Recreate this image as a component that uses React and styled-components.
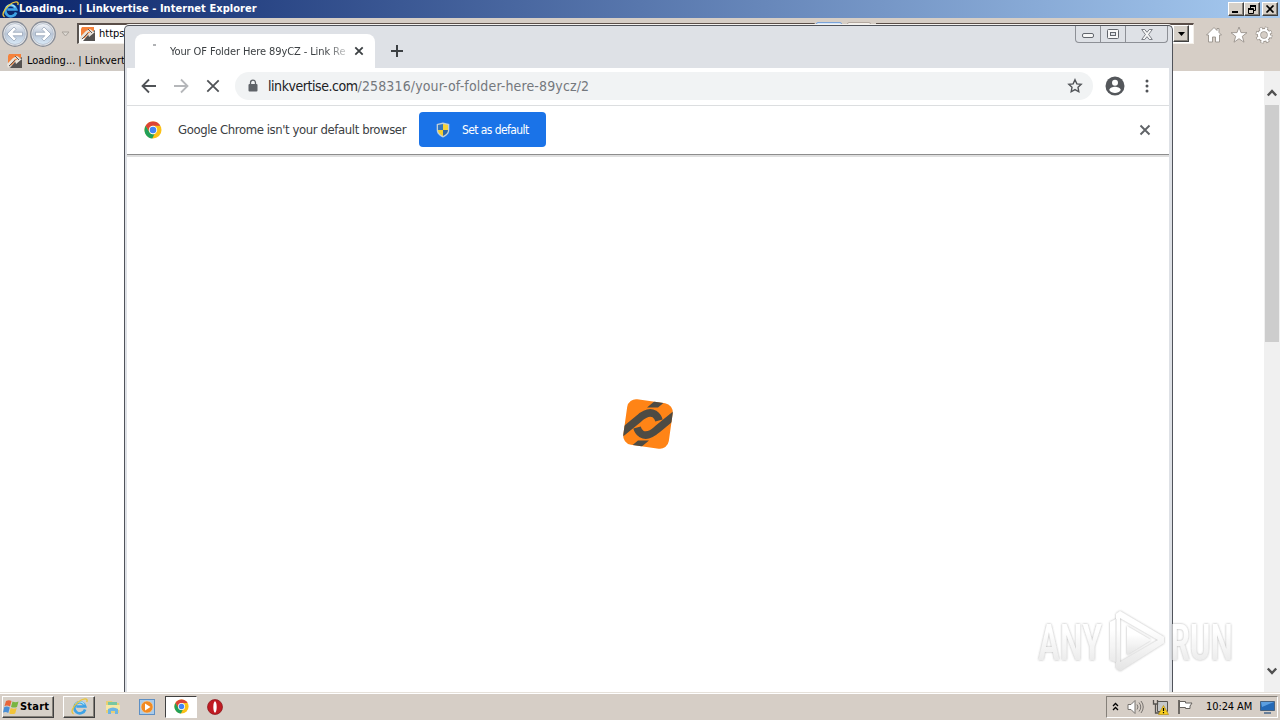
import React from 'react'
import styled, { createGlobalStyle, css } from 'styled-components'

const GlobalStyle = createGlobalStyle`
    body {
        margin: 0;
        overflow: hidden;
    }

    * {
        box-sizing: border-box;
    }

    svg {
        display: block;
        flex: none;
    }
`

const raised = css`
    border: 1px solid;
    border-color: #fff #404040 #404040 #fff;
    box-shadow: inset -1px -1px 0 #858079;
    background: #d6d0c8;
`;

const Desktop = styled.div`
    position: relative;
    width: 1280px;
    height: 720px;
    overflow: hidden;
    display: flex;
    flex-direction: column;
    background: #fff;
    font-family: "DejaVu Sans Condensed", "DejaVu Sans", sans-serif;
    font-stretch: condensed;
    font-size: 11px;
    color: #000;
`;

const Label = styled.span`
    flex: none;
    white-space: pre;
    font-size: ${p => p.$size || 11}px;
    font-weight: ${p => p.$bold ? 700 : 400};
    letter-spacing: ${p => p.$track || 0}px;
    color: ${p => p.$color || 'inherit'};
    line-height: 16px;
`;

const TitleBar = styled.div`
    height: 18px;
    flex: none;
    display: flex;
    align-items: center;
    padding: 0 2px 0 2px;
    background: linear-gradient(90deg, #0a246a, #a6caf0);
`;

const Spacer = styled.div`
    flex: 1;
`;

const CaptionButton = styled.div`
    ${raised}
    width: 16px;
    height: 14px;
    margin-left: ${p => p.$gap || 0}px;
    display: flex;
    align-items: center;
    justify-content: center;
`;

const NavBar = styled.div`
    height: 31px;
    flex: none;
    display: flex;
    align-items: center;
    background: #d6cec6;
    padding: 0 7px 0 1px;
`;

const Field = styled.div`
    flex: none;
    width: ${p => p.$width}px;
    height: 21px;
    margin: 0 0 1px ${p => p.$gap || 0}px;
    display: flex;
    align-items: center;
    background: #fff;
    border: 1px solid #f4f0ea;
    border-top: 2px solid #5a4e48;
    border-left: 2px solid #5a5450;
    padding-left: 1px;
`;

const FieldButton = styled.div`
    flex: none;
    width: ${p => p.$width}px;
    height: 22px;
    margin: 0 0 2px ${p => p.$gap}px;
    background: ${p => p.$active ? '#d3e6fb' : '#f3efea'};
    border: 1px solid ${p => p.$active ? '#7ba3d8' : '#b3a9a1'};
    border-radius: 2px;
`;

const DropButton = styled.div`
    ${raised}
    width: 16px;
    height: 17px;
    margin: 0 4px 0 auto;
    display: flex;
    align-items: center;
    justify-content: center;
`;

const NavIcons = styled.div`
    display: flex;
    gap: 7px;
    margin-left: auto;
    padding-top: 3px;
`;

const TabRow = styled.div`
    height: 22px;
    flex: none;
    background: #d6cec6;
`;

const IeTab = styled.div`
    width: 240px;
    height: 21px;
    margin-top: 1px;
    padding-left: 7px;
    display: flex;
    align-items: center;
    gap: 4px;
    background: #d0cac4;
`;

const IePage = styled.div`
    flex: 1;
    display: flex;
    justify-content: flex-end;
`;

const ScrollBar = styled.div`
    width: 16px;
    display: flex;
    flex-direction: column;
    align-items: center;
    justify-content: space-between;
    background: #f0f0f0;
    padding: 17px 0 16px;
`;

const Thumb = styled.div`
    width: 14px;
    height: 237px;
    margin: 7px 0 auto;
    background: #cdcdcd;
`;

const ChromeWindow = styled.div`
    position: absolute;
    left: 124px;
    top: 25px;
    width: 1049px;
    height: 667px;
    display: flex;
    flex-direction: column;
    border: 1px solid #50535a;
    border-bottom: none;
    border-radius: 5px 5px 0 0;
    background: #dee1e6;
    padding: 0 3px 0 2px;
    box-shadow: 0 -1px 0 #f4f2ef;
    color: #3c4043;
`;

const TabStrip = styled.div`
    height: 42px;
    flex: none;
    display: flex;
    align-items: flex-end;
    padding-left: 8px;
`;

const ChromeTab = styled.div`
    width: 240px;
    height: 34px;
    padding: 0 11px 0 16px;
    display: flex;
    align-items: center;
    background: #fff;
    border-radius: 8px 8px 0 0;
`;

const TabSpinner = styled.div`
    width: 3px;
    height: 2px;
    margin: -13px 14px 0 2px;
    background: #b0b2b5;
`;

const TabTitle = styled.div`
    width: 178px;
    padding-top: 1px;
    mask-image: linear-gradient(90deg, #000 155px, rgba(0, 0, 0, 0.25) 176px);
`;

const PlusIcon = styled.svg`
    margin: 0 0 11px 16px;
`;

const WindowButtons = styled.div`
    align-self: flex-start;
    height: 17px;
    margin-left: auto;
    margin-right: 1px;
    display: flex;
    border: 1px solid #8d9096;
    border-top: none;
    border-radius: 0 0 4px 4px;
`;

const WindowButton = styled.div`
    width: ${p => p.$width}px;
    display: flex;
    align-items: center;
    justify-content: center;
    border-left: ${p => p.$first ? 'none' : '1px solid #8d9096'};
`;

const Toolbar = styled.div`
    height: 38px;
    flex: none;
    display: flex;
    align-items: center;
    padding: 0 13px 1px 13px;
    background: #fff;
    border-bottom: 1px solid #dcdee0;
`;

const NavButtons = styled.div`
    display: flex;
    gap: 14px;
`;

const Omnibox = styled.div`
    width: 858px;
    height: 28px;
    margin: 0 12px 0 13px;
    padding: 0 9px 0 12px;
    display: flex;
    align-items: center;
    justify-content: space-between;
    border-radius: 14px;
    background: #f1f3f4;
`;

const Url = styled.div`
    display: flex;
    align-items: center;
    margin: 0 auto 0 9px;
`;

const InfoBar = styled.div`
    height: 49px;
    flex: none;
    display: flex;
    align-items: center;
    padding: 0 16px 1px 17px;
    background: #fff;
    border-bottom: 1px solid #8d8d8d;
`;

const InfoText = styled.div`
    width: 241px;
    margin-left: 16px;
`;

const DefaultButton = styled.div`
    width: 127px;
    height: 35px;
    display: flex;
    align-items: center;
    gap: 12px;
    padding-left: 17px;
    border-radius: 4px;
    background: #1a73e8;
`;

const ChromePage = styled.div`
    flex: 1;
    display: flex;
    align-items: center;
    justify-content: center;
    background: #fff;
    border-top: 2px solid #dfdfdf;
    padding-bottom: 2px;
`;

const Watermark = styled.svg`
    position: absolute;
    left: 1030px;
    top: 604px;
`;

const TaskBar = styled.div`
    height: 28px;
    flex: none;
    display: flex;
    align-items: center;
    padding: 0 2px;
    background: #d6cec6;
    border-top: 1px solid #e6e1da;
    box-shadow: inset 0 1px 0 #fff;
`;

const StartButton = styled.div`
    ${raised}
    width: 52px;
    height: 22px;
    display: flex;
    align-items: center;
`;

const TaskButton = styled.div`
    width: 32px;
    height: 22px;
    display: flex;
    align-items: center;
    justify-content: center;
    margin-left: ${p => p.$gap || 2}px;
    ${p => p.$raised && raised}
    ${p => p.$active && css`
        background: #fff;
        border: 1px solid;
        border-color: #404040 #fff #fff #404040;
    `}
`;

const Tray = styled.div`
    width: 172px;
    height: 22px;
    margin-left: auto;
    display: flex;
    align-items: center;
    padding: 0 2px 0 5px;
    border: 1px solid;
    border-color: #858079 #fff #fff #858079;
`;

const TrayIcons = styled.div`
    display: flex;
    align-items: center;
    gap: 8px;
    width: 94px;
`;

function IeLogo({ size })
{
    return <svg width={size} height={size} viewBox="0 0 16 16" fill="none">
        <path d="M13.3 10.800A5.200 5.200 0 1 1 13.400 8H5" stroke="#3fa3e6" strokeWidth="2.500" />
        <path d="M12.600 6.200A4.900 4.900 0 0 0 4.200 5.800" stroke="#a5e4fb" strokeWidth="1.100" />
        <path d="M2.500 14.800C-.7 14 1.500 8 6.500 4 11.500 0 16.500-.4 14.800 3.800" stroke="#e8c53c" strokeWidth="1.300" />
    </svg>;
}

function LinkIcon()
{
    return <svg width="16" height="16" viewBox="0 0 16 16">
        <path d="M2 1h12v4L9 7 5 12 1 13V3z" fill="#f5823b" />
        <path d="M15 4v11H3l5-6z" fill="#555251" />
        <path d="M0 11 6 5l4-2 3 2-5 1-7 9zM8 8l4-3 3 1-6 5z" fill="#e9e4dc" />
        <path d="M8 3l4 4M2 13l6-6" stroke="#625b58" />
    </svg>;
}

function RoundArrow({ flip })
{
    return <svg width="28" height="28" viewBox="0 0 28 28">
        <defs>
            <linearGradient id="ring" x2="0" y2="1">
                <stop stopColor="#f5f7fa" />
                <stop offset=".5" stopColor="#b8c5d6" />
                <stop offset="1" stopColor="#d9eaf8" />
            </linearGradient>
        </defs>
        <circle cx="14" cy="14" r="12.200" fill="#eceef0" stroke="#8a8f99" strokeWidth="1.400" />
        <circle cx="14" cy="14" r="10.400" fill="url(#ring)" stroke="#bac2cf" />
        <path transform={flip ? 'rotate(180 14 14)' : undefined}
            d="M6 14l7-7 2.200 2.200-3.100 3.100h9.400v3.400h-9.400l3.100 3.100L13 21z" fill="#fff" stroke="#8593a9" strokeWidth=".6" />
    </svg>;
}

function Chevron({ up })
{
    return <svg width="12" height="10" viewBox="0 0 12 10">
        <path d={up ? 'M1.800 7.500 6 3l4.200 4.500' : 'M1.800 2.500 6 7l4.200-4.500'} fill="none" stroke="#505050" strokeWidth="2.400" />
    </svg>;
}

function ChromeLogo({ size })
{
    return <svg width={size} height={size} viewBox="0 0 18 18">
        <circle cx="9" cy="9" r="8.500" fill="#fbc116" />
        <path d="M9 .5a8.500 8.500 0 0 1 7.400 4.300H9a4.200 4.200 0 0 0-3.700 6.300L1.600 4.800A8.500 8.500 0 0 1 9 .5z" fill="#dc4437" />
        <path d="M1.600 4.800 5.400 11.200A4.200 4.200 0 0 0 10.500 13l-2.200 4.500A8.500 8.500 0 0 1 1.600 4.800z" fill="#21a05a" />
        <circle cx="9" cy="9" r="4.200" fill="#fff" />
        <circle cx="9" cy="9" r="3.300" fill="#4285f4" />
    </svg>;
}

function Shield()
{
    return <svg width="14" height="16" viewBox="0 0 14 16">
        <path d="M7 .5 13.300 2v6c0 3.800-3 6-6.300 7.500C3.700 14 .7 11.800.7 8V2z" fill="#c3d0d8" />
        <path d="M7 2v6H2V3z" fill="#3476bd" />
        <path d="M7 2v6h5V3z" fill="#f6d33a" />
        <path d="M2 8h5v6C4 12.500 2 10.800 2 8z" fill="#f4cf32" />
        <path d="M12 8H7v6c3-1.500 5-3.200 5-6z" fill="#2d68a9" />
    </svg>;
}

function PageLogo()
{
    return <svg width="52" height="52" viewBox="0 0 52 52">
        <defs>
            <clipPath id="tile"><rect x="3" y="3" width="46" height="46" rx="9" transform="rotate(8 26 26)" /></clipPath>
        </defs>
        <g clipPath="url(#tile)">
            <rect width="52" height="52" fill="#ff8416" />
            <g fill="none" stroke="#4d4b44" strokeWidth="7.600">
                <path d="M-2 36 17 20.500Q26 12.500 32.500 16Q36 18.500 37 22.500" />
                <path d="M54 16 35 31.500Q26 39.500 19.500 36Q16 33.500 15 29.500" />
            </g>
            <path d="M25 9.500 34 2h11l-9 7.500zM27 42.500 18 50H7l9-7.500z" fill="#4d4b44" />
        </g>
    </svg>;
}

function AnyRun()
{
    return <Watermark width="210" height="76" viewBox="0 0 210 76">
        <defs>
            <filter id="soft" x="-10%" y="-10%" width="120%" height="120%">
                <feDropShadow dx="0" dy="0" stdDeviation="1.300" floodColor="#666" floodOpacity=".6" />
            </filter>
            <linearGradient id="fade" x2="0" y2="1">
                <stop offset=".3" stopColor="#fff" />
                <stop offset=".6" stopColor="#f3f3f3" />
                <stop offset="1" stopColor="#e2e2e2" />
            </linearGradient>
        </defs>
        <g filter="url(#soft)" fill="url(#fade)" opacity=".9" fontFamily="Roboto, sans-serif" fontSize="50" fontWeight="500">
            <text x="8" y="56" textLength="64" lengthAdjust="spacingAndGlyphs">ANY</text>
            <text x="140" y="56" textLength="63" lengthAdjust="spacingAndGlyphs">RUN</text>
            <path d="M90 7 134 33v6L90 67l-4-3v-6l-6-2V18l6-3V10zM90 14v44l38-22z" fillRule="evenodd" />
            <path d="M97 22v29l24-15z" />
            <path d="M86 15v43" stroke="#d9d9d9" fill="none" />
        </g>
    </Watermark>;
}

function Browser()
{
    return <ChromeWindow>
        <TabStrip>
            <ChromeTab>
                <TabSpinner />
                <TabTitle><Label $track={-0.1}>Your OF Folder Here 89yCZ - Link Re</Label></TabTitle>
                <svg width="10" height="10" viewBox="0 0 10 10" style={{ marginLeft: 'auto' }}>
                    <path d="M1.300 1.300l7.400 7.400M8.700 1.300 1.300 8.700" stroke="#3c4043" strokeWidth="1.800" />
                </svg>
            </ChromeTab>
            <PlusIcon width="12" height="12" viewBox="0 0 12 12">
                <path d="M6 0v12M0 6h12" stroke="#3c4043" strokeWidth="2" />
            </PlusIcon>
            <WindowButtons>
                <WindowButton $width={24} $first>
                    <svg width="12" height="5" style={{ marginTop: 3 }}><rect x=".5" y=".5" width="11" height="4" rx="1.500" fill="#f7f7f7" stroke="#62666d" /></svg>
                </WindowButton>
                <WindowButton $width={25}>
                    <svg width="12" height="10" fill="#f7f7f7" stroke="#62666d">
                        <rect x=".5" y=".5" width="11" height="9" rx="1" />
                        <rect x="3.500" y="3.500" width="5" height="3" fill="#dee1e6" />
                    </svg>
                </WindowButton>
                <WindowButton $width={42}>
                    <svg width="12" height="11" viewBox="0 0 12 11">
                        <path d="M.7.5h3L6 3.300 8.300.5h3L7.600 5.500l3.700 5h-3L6 7.700l-2.300 2.800h-3l3.700-5z" fill="#f7f7f7" stroke="#62666d" strokeWidth=".8" />
                    </svg>
                </WindowButton>
            </WindowButtons>
        </TabStrip>
        <Toolbar>
            <NavButtons>
                <svg width="18" height="18" viewBox="0 0 18 18" fill="none" stroke="#505357" strokeWidth="1.800"><path d="M16 9H3M9 2.500 2.500 9 9 15.500" /></svg>
                <svg width="18" height="18" viewBox="0 0 18 18" fill="none" stroke="#b5b7ba" strokeWidth="1.800"><path d="M2 9h13M9 2.500 15.500 9 9 15.500" /></svg>
                <svg width="18" height="18" viewBox="0 0 18 18" fill="none" stroke="#505357" strokeWidth="1.800"><path d="M3.300 3.300 14.700 14.700M14.700 3.300 3.300 14.700" /></svg>
            </NavButtons>
            <Omnibox>
                <svg width="12" height="14" viewBox="0 0 12 14">
                    <rect x="1.500" y="5" width="9" height="7.500" rx="1" fill="#5f6368" />
                    <path d="M3.500 5.500V3.700a2.500 2.500 0 0 1 5 0v1.800" fill="none" stroke="#5f6368" strokeWidth="1.300" />
                </svg>
                <Url>
                    <Label $size={14} $track={-0.45} $color="#202124">linkvertise.com</Label>
                    <Label $size={14} $track={0.13} $color="#74787d">/258316/your-of-folder-here-89ycz/2</Label>
                </Url>
                <svg width="18" height="18" viewBox="0 0 18 18">
                    <path d="M9 2.800l1.850 4.050 4.350.5-3.200 3 .8 4.400L9 12.600l-3.800 2.150.8-4.400-3.200-3 4.350-.5z" fill="none" stroke="#505357" strokeWidth="1.400" />
                </svg>
            </Omnibox>
            <svg width="20" height="20" viewBox="0 0 20 20">
                <circle cx="10" cy="10" r="9.500" fill="#54575b" />
                <circle cx="10" cy="6.800" r="3" fill="#fff" />
                <path d="M4.200 14c.5-2.300 3.500-3.200 5.800-3.200s5.300.9 5.800 3.200a7 7 0 0 1-11.600 0z" fill="#fff" />
            </svg>
            <svg width="4" height="16" viewBox="0 0 4 16" fill="#505357" style={{ marginLeft: 'auto', marginRight: 7 }}>
                <circle cx="2" cy="3" r="1.500" /><circle cx="2" cy="8" r="1.500" /><circle cx="2" cy="13" r="1.500" />
            </svg>
        </Toolbar>
        <InfoBar>
            <ChromeLogo size={18} />
            <InfoText><Label $size={13} $track={-0.41}>Google Chrome isn't your default browser</Label></InfoText>
            <DefaultButton>
                <Shield />
                <Label $size={12} $track={-0.58} $color="#fff">Set as default</Label>
            </DefaultButton>
            <Spacer />
            <svg width="16" height="16" viewBox="0 0 16 16"><path d="M3.500 3.500l9 9M12.500 3.500l-9 9" stroke="#606367" strokeWidth="1.900" /></svg>
        </InfoBar>
        <ChromePage><PageLogo /></ChromePage>
    </ChromeWindow>;
}

export default function App()
{
    return <>
        <GlobalStyle />
        <Desktop>
            <TitleBar>
                <IeLogo size={17} />
                <Label $bold $track={0.06} $color="#fff">Loading... | Linkvertise - Internet Explorer</Label>
                <Spacer />
                <CaptionButton><svg width="10" height="8"><path d="M1 7h6" stroke="#000" strokeWidth="2" /></svg></CaptionButton>
                <CaptionButton><svg width="10" height="9" fill="none" stroke="#000"><path d="M3 1h6M1 4h5" strokeWidth="2" /><path d="M3.500 3V.5h5v5H7M1.500 3.500h5v5h-5z" /></svg></CaptionButton>
                <CaptionButton $gap={2}><svg width="10" height="8"><path d="M1.500.5l7 7M8.500.5l-7 7" stroke="#000" strokeWidth="1.700" /></svg></CaptionButton>
            </TitleBar>
            <NavBar>
                <RoundArrow />
                <RoundArrow flip />
                <svg width="9" height="6" style={{ marginLeft: 4 }}><path d="M1 1h7L4.500 5z" fill="#ddd9d3" stroke="#a9a39c" /></svg>
                <Field $width={738} $gap={7}>
                    <LinkIcon />
                    <Label style={{ marginLeft: 3 }}>https://</Label>
                </Field>
                <FieldButton $width={26} $gap={1} $active />
                <FieldButton $width={24} $gap={5} />
                <Field $width={318} $gap={5}>
                    <DropButton><svg width="7" height="4"><path d="M0 0h7L3.500 4z" /></svg></DropButton>
                </Field>
                <NavIcons>
                    <svg width="18" height="18" viewBox="0 0 18 18"><path d="M9 1.500 1.500 9h2v7h4v-5h3v5h4V9h2L14 6.500V2.500h-2v2z" fill="#fff" stroke="#99928b" strokeWidth=".9" /></svg>
                    <svg width="18" height="18" viewBox="0 0 18 18"><path d="M9 1l2 5.600 6 .1-4.700 3.600 1.700 5.900-5-3.500-5 3.500 1.700-5.900L1 6.700l6-.1z" fill="#fff" stroke="#99928b" strokeWidth=".9" /></svg>
                    <svg width="18" height="18" viewBox="0 0 18 18" fill="none">
                        <circle cx="9" cy="9" r="6.500" stroke="#99928b" strokeWidth="4" strokeDasharray="2.900 2.200" />
                        <circle cx="9" cy="9" r="5" stroke="#99928b" strokeWidth="4" />
                        <circle cx="9" cy="9" r="6.500" stroke="#fff" strokeWidth="2.600" strokeDasharray="2 3.100" strokeDashoffset="-.4" />
                        <circle cx="9" cy="9" r="4.900" stroke="#fff" strokeWidth="2.400" />
                    </svg>
                </NavIcons>
            </NavBar>
            <TabRow>
                <IeTab>
                    <LinkIcon />
                    <Label $track={-0.02}>Loading... | Linkvertise</Label>
                </IeTab>
            </TabRow>
            <IePage>
                <ScrollBar><Chevron up /><Thumb /><Chevron /></ScrollBar>
            </IePage>
            <TaskBar>
                <StartButton>
                    <svg width="17" height="16" viewBox="0 0 17 16">
                        <path d="M3 2q3-1.500 5.500 0L7 7.500Q4.500 6 1.500 7z" fill="#e8663a" />
                        <path d="M9.500 2.500q3 1.500 6 0L14 8q-3 1-6 0z" fill="#79b541" />
                        <path d="M1.300 8q3-1.300 5.500.5L5.300 14Q3 12.500 0 13.500z" fill="#4a8fd6" />
                        <path d="M7.700 9q3 1.300 6 0l-1.500 5.500q-3 1-6 0z" fill="#f2c43a" />
                    </svg>
                    <Label $bold $track={0.2}>Start</Label>
                </StartButton>
                <TaskButton $gap={9} $raised><IeLogo size={17} /></TaskButton>
                <TaskButton>
                    <svg width="16" height="16" viewBox="0 0 16 16">
                        <path d="M1 2h6l1 2h6v10H1z" fill="#e9cf73" />
                        <path d="M3 3h9v4H3z" fill="#78c7a2" />
                        <path d="M1 6h14v5H1z" fill="#f6e8a5" />
                        <path d="M3 15V10q5-3 10 0v5h-3v-3H6v3z" fill="#6db5e4" />
                    </svg>
                </TaskButton>
                <TaskButton>
                    <svg width="16" height="16" viewBox="0 0 16 16">
                        <rect x=".5" y=".5" width="15" height="15" fill="#a9cbea" stroke="#5d8fc4" />
                        <circle cx="8" cy="8" r="6" fill="#f18a22" stroke="#f9d4a3" strokeWidth=".6" />
                        <path d="M6 4.500v7L11.500 8z" fill="#fff" />
                    </svg>
                </TaskButton>
                <TaskButton $active><ChromeLogo size={15} /></TaskButton>
                <TaskButton>
                    <svg width="16" height="16" viewBox="0 0 16 16">
                        <circle cx="8" cy="8" r="7.500" fill="#c01b22" stroke="#871319" strokeWidth=".7" />
                        <ellipse cx="8" cy="8" rx="1.700" ry="5.700" fill="#fff" />
                    </svg>
                </TaskButton>
                <Tray>
                    <TrayIcons>
                        <svg width="7" height="9" fill="none" stroke="#000" strokeWidth="1.300"><path d="M1 4l2.500-2.500L6 4M1 8l2.500-2.500L6 8" /></svg>
                        <svg width="17" height="16" viewBox="0 0 17 16" fill="none" stroke="#77736f">
                            <path d="M1 5.500h3l4-4v13l-4-4H1z" fill="#fff" />
                            <path d="M10 5.500q2 2.500 0 5M12 3.500q3.500 4.500 0 9M14 2q4.500 6 0 12" />
                        </svg>
                        <svg width="17" height="16" viewBox="0 0 17 16">
                            <path d="M5.500 2.500h10v10h-10z" fill="#c5c8c9" stroke="#55534f" />
                            <path d="M1.500 1v4h4V1M3.500 5v9h4" fill="none" stroke="#55534f" strokeWidth="1.300" />
                            <path d="M11.500 6.500l5 9h-10z" fill="#f8cf20" stroke="#b48c10" strokeWidth=".7" />
                            <path d="M11.500 9v3M11.500 13v1.300" stroke="#000" strokeWidth="1.200" />
                        </svg>
                        <svg width="17" height="16" viewBox="0 0 17 16" fill="#fff" stroke="#65615d">
                            <path d="M2.500 2.500h6v1.500h6.500l-2 3 0 2.500H8.500V8.500h-6z" />
                            <path d="M2 1v14" strokeWidth="1.800" />
                        </svg>
                    </TrayIcons>
                    <Label $track={-0.1}>10:24 AM</Label>
                    <svg width="15" height="14" viewBox="0 0 15 14" style={{ marginLeft: 'auto' }}>
                        <path d="M.5 1.500h14v9H.5z" fill="#2469b6" stroke="#48627f" />
                        <path d="M1 2h13L2 7z" fill="#5c9fe0" />
                        <path d="M4 13h7" stroke="#45658a" strokeWidth="1.500" />
                    </svg>
                </Tray>
            </TaskBar>
            <Browser />
            <AnyRun />
        </Desktop>
    </>;
}
